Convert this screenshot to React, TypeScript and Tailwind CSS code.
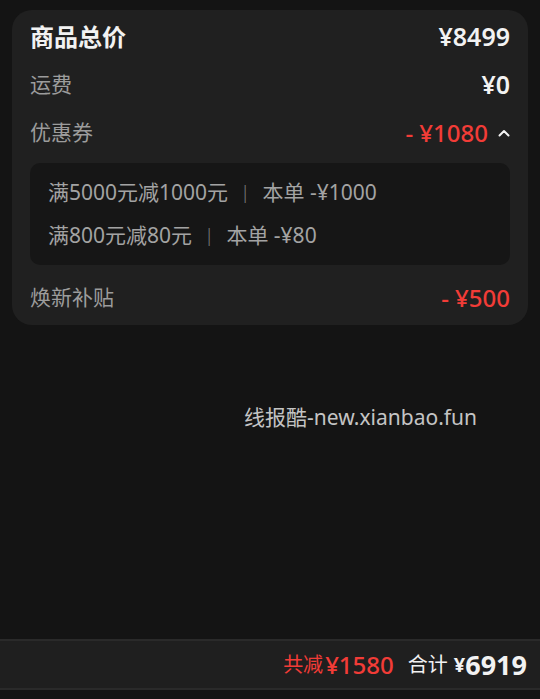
const coupons = [
  { rule: "满5000元减1000元", cut: "本单 -¥1000" },
  { rule: "满800元减80元", cut: "本单 -¥80" },
];

function App() {
  return (
    <main
      className="relative flex h-screen flex-col bg-[#141414] text-[#f2f2f2]"
      style={{ fontFamily: '"Noto Sans", "Noto Sans CJK SC", sans-serif' }}
    >
      <section className="mx-3 mt-[10px] rounded-[20px] bg-[#202020] px-[18px] pt-[3px] pb-[3px]">
        <div className="flex h-12 items-center justify-between">
          <span className="text-[24px] font-bold">商品总价</span>
          <span className="text-[25px] font-semibold">¥8499</span>
        </div>
        <div className="flex h-12 items-center justify-between">
          <span className="text-[21px] text-[#9c9c9c]">运费</span>
          <span className="text-[25px] font-semibold">¥0</span>
        </div>
        <div className="flex h-12 items-center justify-between">
          <span className="text-[21px] text-[#9c9c9c]">优惠券</span>
          <span className="flex items-center gap-[10px]">
            <span className="text-[24px] font-medium text-[#f23c37]">- ¥1080</span>
            <svg width="12" height="8" viewBox="0 0 12 8" fill="none">
              <path d="M1.5 6.5L6 2l4.5 4.5" stroke="#f2f2f2" strokeWidth="2" strokeLinecap="round" strokeLinejoin="round" />
            </svg>
          </span>
        </div>
        <div className="mt-[6px] rounded-[10px] bg-[#161616] px-[18px] py-2">
          {coupons.map((c) => (
            <div key={c.rule} className="flex h-[43px] items-center text-[21px] text-[#a3a3a3]">
              <span>{c.rule}</span>
              <span className="mx-[12px] text-[19px] font-light text-[#7a7a7a]">|</span>
              <span>{c.cut}</span>
            </div>
          ))}
        </div>
        <div className="mt-[9px] flex h-12 items-center justify-between">
          <span className="text-[21px] text-[#9c9c9c]">焕新补贴</span>
          <span className="text-[24px] font-medium text-[#f23c37]">- ¥500</span>
        </div>
      </section>

      <div className="flex-1" />

      <div className="absolute left-[244px] top-[403px] text-[21px] leading-7 text-[#c4c4c4]">
        线报酷-new.xianbao.fun
      </div>

      <footer className="mb-[9px] flex h-[51px] items-center justify-end border-y-2 border-[#2a2a2a] bg-[#1f1f1f] pr-[13px]">
        <span className="text-[20px] text-[#f23c37]">共减</span>
        <span className="ml-[2px] text-[24px] font-medium text-[#f23c37]">¥1580</span>
        <span className="ml-[14px] text-[20px]">合计</span>
        <span className="ml-[6px] text-[20px] font-bold">¥</span>
        <span className="text-[27px] font-bold leading-none">6919</span>
      </footer>
    </main>
  );
}

export default App;
